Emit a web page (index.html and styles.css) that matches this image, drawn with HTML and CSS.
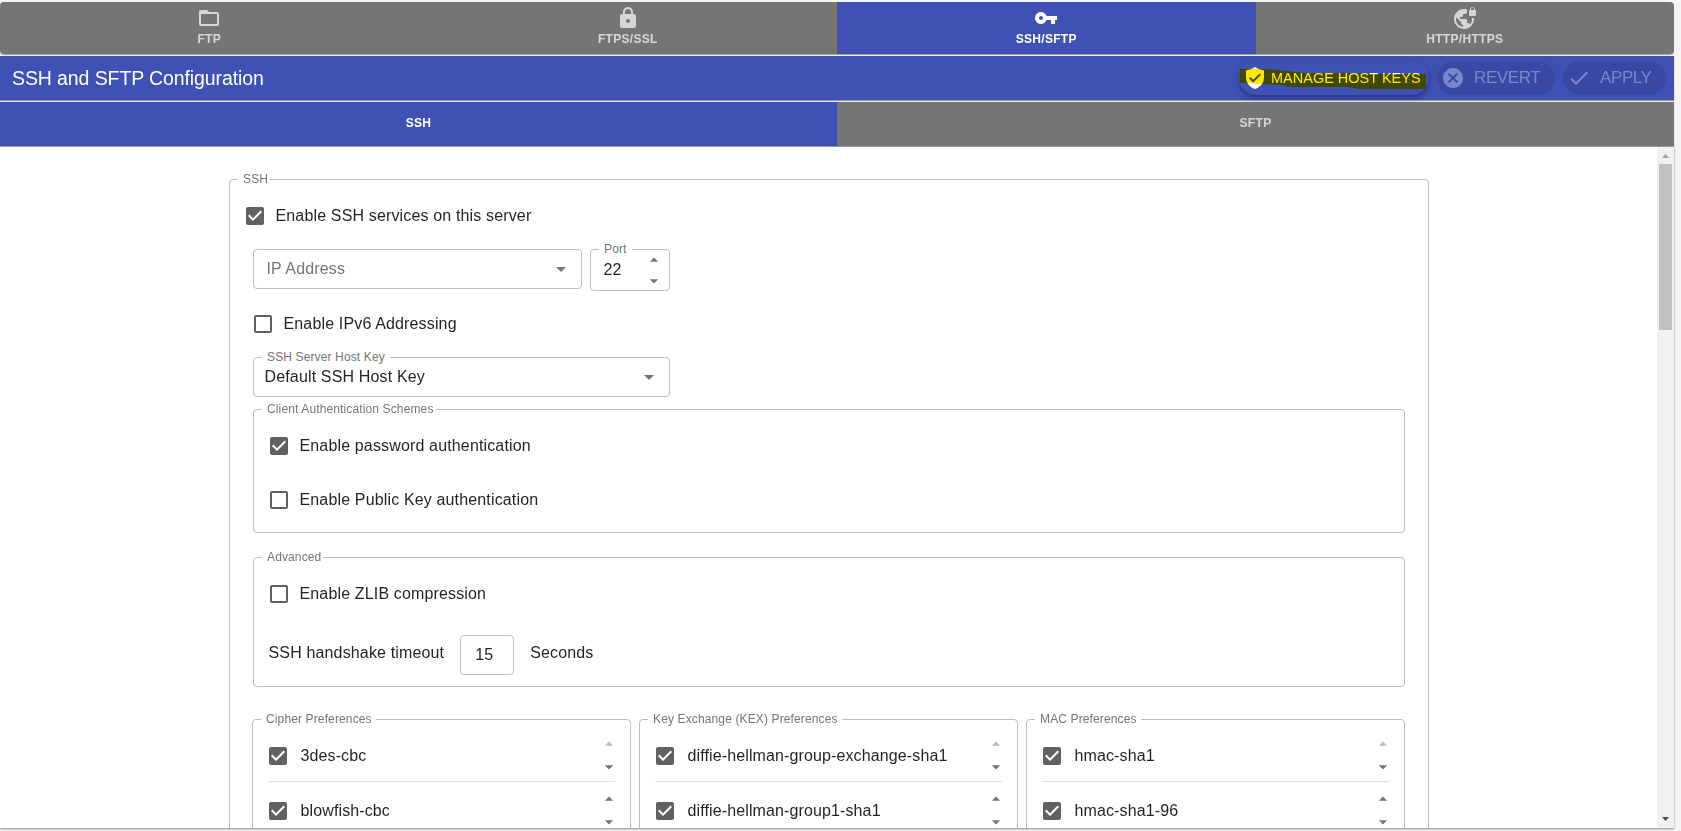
FILE: index.html
```html
<!DOCTYPE html>
<html lang="en">

<head>
    <meta charset="UTF-8">
    <meta name="viewport" content="width=device-width, initial-scale=1.0">
    <title>SSH and SFTP Configuration</title>
    <link rel="stylesheet" href="styles.css">
</head>

<body>
    <!-- shared icons -->
    <svg width="0" height="0" class="sprite">
        <symbol id="checked" viewBox="0 0 24 24">
            <path d="M19 3H5c-1.11 0-2 .9-2 2v14c0 1.1.89 2 2 2h14c1.11 0 2-.9 2-2V5c0-1.1-.89-2-2-2zm-9 14l-5-5 1.41-1.41L10 14.17l7.59-7.59L19 8l-9 9z"/>
        </symbol>
        <symbol id="unchecked" viewBox="0 0 24 24">
            <path d="M19 5v14H5V5h14m0-2H5c-1.1 0-2 .9-2 2v14c0 1.1.9 2 2 2h14c1.1 0 2-.9 2-2V5c0-1.1-.9-2-2-2z"/>
        </symbol>
        <symbol id="down" viewBox="0 0 24 24"><path d="M7 10l5 5 5-5z"/></symbol>
        <symbol id="up" viewBox="0 0 24 24"><path d="M7 14l5-5 5 5z"/></symbol>
    </svg>

    <div class="page">
        <nav class="tabs main-tabs">
            <div class="tab">
                <svg class="icon" viewBox="0 0 24 24"><path d="M20 18H4V8h16m0-2h-8l-2-2H4c-1.110 0-2 .890-2 2v12c0 1.100.900 2 2 2h16c1.100 0 2-.900 2-2V8c0-1.110-.900-2-2-2z"/></svg>
                <span>FTP</span>
            </div>
            <div class="tab">
                <svg class="icon" viewBox="0 0 24 24"><path d="M18 8h-1V6c0-2.76-2.24-5-5-5S7 3.24 7 6v2H6c-1.1 0-2 .9-2 2v10c0 1.1.9 2 2 2h12c1.1 0 2-.9 2-2V10c0-1.1-.9-2-2-2zm-6 9c-1.1 0-2-.9-2-2s.9-2 2-2 2 .9 2 2-.9 2-2 2zm3.1-9H8.9V6c0-1.71 1.39-3.1 3.1-3.1 1.71 0 3.1 1.39 3.1 3.1v2z"/></svg>
                <span>FTPS/SSL</span>
            </div>
            <div class="tab active">
                <svg class="icon" viewBox="0 0 24 24"><path d="M12.65 10C11.83 7.67 9.61 6 7 6c-3.31 0-6 2.69-6 6s2.69 6 6 6c2.61 0 4.83-1.67 5.65-4H17v4h4v-4h2v-4H12.65zM7 14c-1.1 0-2-.9-2-2s.9-2 2-2 2 .9 2 2-.9 2-2 2z"/></svg>
                <span>SSH/SFTP</span>
            </div>
            <div class="tab">
                <svg class="icon" viewBox="0 0 24 24"><path d="M22 4v-.5C22 2.12 20.88 1 19.5 1S17 2.12 17 3.5V4c-.55 0-1 .45-1 1v4c0 .55.45 1 1 1h5c.55 0 1-.45 1-1V5c0-.55-.45-1-1-1zm-.8 0h-3.4v-.5c0-.94.76-1.7 1.7-1.7s1.7.76 1.7 1.7V4zm-2.28 8c.04.33.08.66.08 1 0 2.08-.8 3.97-2.1 5.39-.26-.81-1-1.39-1.9-1.39h-1v-3c0-.55-.45-1-1-1H7v-2h2c.55 0 1-.45 1-1V8h2c1.1 0 2-.9 2-2V3.46c-.95-.3-1.95-.46-3-.46C5.48 3 1 7.48 1 13s4.48 10 10 10 10-4.48 10-10c0-.34-.02-.67-.05-1h-2.03zM10 20.93c-3.95-.49-7-3.85-7-7.93 0-.62.08-1.21.21-1.79L8 16v1c0 1.1.9 2 2 2v1.93z"/></svg>
                <span>HTTP/HTTPS</span>
            </div>
        </nav>

        <header class="toolbar">
            <h1>SSH and SFTP Configuration</h1>
            <button class="btn manage">
                <svg class="icon" viewBox="0 0 24 24"><path d="M12 1Q8 4 3 4.500V11C3 16.550 6 21 12 23C18 21 21 16.550 21 11V4.500Q16 4 12 1ZM10.200 16.600L6 12.400L7.400 11L10.200 13.800L16.600 7.400L18 8.800Z"/></svg>
                <span>MANAGE HOST KEYS</span>
                <svg class="marker" viewBox="0 0 186 20"><path d="M0 0H23L48 2L65 4L110 4L135 5H186V20H120L108 18H53L40 16L23 15L0 14Z"/></svg>
            </button>
            <button class="btn revert" disabled>
                <svg class="icon" viewBox="0 0 24 24"><path d="M12 2C6.470 2 2 6.470 2 12s4.470 10 10 10 10-4.470 10-10S17.530 2 12 2zm5 13.590L15.590 17 12 13.410 8.410 17 7 15.590 10.590 12 7 8.410 8.410 7 12 10.590 15.590 7 17 8.410 13.410 12 17 15.590z"/></svg>
                <span>REVERT</span>
            </button>
            <button class="btn apply" disabled>
                <svg class="icon" viewBox="0 0 24 24"><path d="M9 16.170L4.830 12l-1.420 1.410L9 19 21 7l-1.410-1.410z"/></svg>
                <span>APPLY</span>
            </button>
        </header>

        <nav class="tabs sub-tabs">
            <div class="tab active">SSH</div>
            <div class="tab">SFTP</div>
        </nav>

        <main class="content">
            <div class="scroll-area">
                <fieldset class="group ssh">
                    <legend>SSH</legend>
                    <label class="check"><svg><use href="#checked"/></svg>Enable SSH services on this server</label>

                    <div class="inner">
                        <div class="row">
                            <div class="field ip">
                                <span class="placeholder">IP Address</span>
                                <svg class="arrow"><use href="#down"/></svg>
                            </div>
                            <div class="field port">
                                <span class="label">Port</span>
                                <span>22</span>
                                <div class="spinner">
                                    <svg><use href="#up"/></svg>
                                    <svg><use href="#down"/></svg>
                                </div>
                            </div>
                        </div>

                        <label class="check ipv6"><svg><use href="#unchecked"/></svg>Enable IPv6 Addressing</label>

                        <div class="field host-key">
                            <span class="label">SSH Server Host Key</span>
                            <span>Default SSH Host Key</span>
                            <svg class="arrow"><use href="#down"/></svg>
                        </div>

                        <fieldset class="group auth">
                            <legend>Client Authentication Schemes</legend>
                            <label class="check"><svg><use href="#checked"/></svg>Enable password authentication</label>
                            <label class="check"><svg><use href="#unchecked"/></svg>Enable Public Key authentication</label>
                        </fieldset>

                        <fieldset class="group advanced">
                            <legend>Advanced</legend>
                            <label class="check"><svg><use href="#unchecked"/></svg>Enable ZLIB compression</label>
                            <div class="timeout">
                                <span>SSH handshake timeout</span>
                                <div class="field seconds">15</div>
                                <span>Seconds</span>
                            </div>
                        </fieldset>
                    </div>

                    <div class="prefs">
                        <fieldset class="group">
                            <legend>Cipher Preferences</legend>
                            <div class="pref">
                                <label class="check"><svg><use href="#checked"/></svg>3des-cbc</label>
                                <div class="spinner first"><svg><use href="#up"/></svg><svg><use href="#down"/></svg></div>
                            </div>
                            <div class="pref">
                                <label class="check"><svg><use href="#checked"/></svg>blowfish-cbc</label>
                                <div class="spinner"><svg><use href="#up"/></svg><svg><use href="#down"/></svg></div>
                            </div>
                        </fieldset>
                        <fieldset class="group">
                            <legend>Key Exchange (KEX) Preferences</legend>
                            <div class="pref">
                                <label class="check"><svg><use href="#checked"/></svg>diffie-hellman-group-exchange-sha1</label>
                                <div class="spinner first"><svg><use href="#up"/></svg><svg><use href="#down"/></svg></div>
                            </div>
                            <div class="pref">
                                <label class="check"><svg><use href="#checked"/></svg>diffie-hellman-group1-sha1</label>
                                <div class="spinner"><svg><use href="#up"/></svg><svg><use href="#down"/></svg></div>
                            </div>
                        </fieldset>
                        <fieldset class="group">
                            <legend>MAC Preferences</legend>
                            <div class="pref">
                                <label class="check"><svg><use href="#checked"/></svg>hmac-sha1</label>
                                <div class="spinner first"><svg><use href="#up"/></svg><svg><use href="#down"/></svg></div>
                            </div>
                            <div class="pref">
                                <label class="check"><svg><use href="#checked"/></svg>hmac-sha1-96</label>
                                <div class="spinner"><svg><use href="#up"/></svg><svg><use href="#down"/></svg></div>
                            </div>
                        </fieldset>
                    </div>
                </fieldset>
            </div>

            <div class="scrollbar">
                <svg class="sb-up" viewBox="0 0 17 17"><path d="M5 11h7L8.500 7z"/></svg>
                <div class="thumb"></div>
                <svg class="sb-down" viewBox="0 0 17 17"><path d="M5 6h7L8.500 10z"/></svg>
            </div>
        </main>
    </div>
</body>

</html>
```

FILE: styles.css
```css
* {
    box-sizing: border-box;
}

body {
    margin: 0;
    height: 831px;
    overflow: hidden;
    background: #f5f5f5;
    font-family: "Liberation Sans", Arial, sans-serif;
    font-size: 16px;
    letter-spacing: 0.15px;
    color: rgba(0, 0, 0, 0.87);
}

svg {
    display: block;
    fill: currentColor;
    flex: none;
}

.sprite {
    position: absolute;
}

.page {
    width: 1674px;
    height: 826px;
    margin-top: 2px;
    display: flex;
    flex-direction: column;
    gap: 2px;
}

/* tabs */
.tabs {
    display: flex;
    flex: none;
    overflow: hidden;
    box-shadow: 0 1px 1px #999;
}

.tab {
    flex: 1;
    display: flex;
    flex-direction: column;
    align-items: center;
    background: #757575;
    color: rgba(255, 255, 255, 0.7);
    font-size: 12px;
    font-weight: bold;
    letter-spacing: 0.3px;
    line-height: 16px;
}

.tab.active {
    background: #3f51b5;
    color: #fff;
}

.main-tabs {
    height: 52px;
    border-radius: 4px;
}

.main-tabs .tab {
    padding-top: 4px;
}

.main-tabs .icon {
    width: 24px;
    height: 24px;
    margin-bottom: 1px;
}

.sub-tabs {
    height: 44px;
}

.sub-tabs .tab {
    justify-content: center;
    padding-bottom: 2px;
}

/* toolbar */
.toolbar {
    height: 44px;
    flex: none;
    display: flex;
    align-items: center;
    gap: 8px;
    padding: 0 8px 0 12px;
    background: #3f51b5;
    color: #fff;
    box-shadow: 0 1px 1px #999;
}

h1 {
    flex: 1;
    margin: 0;
    font-size: 19.5px;
    font-weight: normal;
    letter-spacing: -0.1px;
}

.btn {
    position: relative;
    display: flex;
    align-items: center;
    height: 34px;
    padding: 0;
    border: 0;
    border-radius: 17px;
    background: #3f51b5;
    color: #fff;
    font-family: inherit;
    font-size: 14.5px;
}

.btn .icon {
    width: 24px;
    height: 24px;
}

.btn:disabled {
    background: #3949a3;
    color: #7a86cb;
    font-size: 17px;
    letter-spacing: -0.4px;
}

.manage {
    width: 190px;
    padding-left: 4px;
    gap: 4px;
    box-shadow: 0 3px 5px -1px rgba(0, 0, 0, 0.25), 0 2px 6px rgba(0, 0, 0, 0.15);
}

/* highlighter stroke over the button label */
.marker {
    position: absolute;
    left: 1px;
    top: 8px;
    width: 186px;
    height: 20px;
    fill: #ffe800;
    mix-blend-mode: multiply;
}

.revert {
    width: 118px;
    padding-left: 4px;
    gap: 9px;
}

.apply {
    width: 103px;
    padding-left: 4px;
    gap: 9px;
}

/* content */
.content {
    flex: 1;
    min-height: 0;
    margin-top: -1px;
    display: flex;
    background: #fff;
    box-shadow: 0 1px 2px #888;
}

.scroll-area {
    flex: 1;
    overflow: hidden;
    padding-top: 25px;
}

.group {
    min-width: 0;
    margin: 0;
    padding: 0;
    border: 1px solid #bdbdbd;
    border-radius: 4px;
}

legend {
    margin-left: 8px;
    padding: 0 2px 0 5.5px;
    font-size: 12px;
    line-height: 15px;
    letter-spacing: 0.13px;
    color: #757575;
}

.ssh {
    width: 1200px;
    height: 800px;
    margin: 0 auto;
}

.check {
    display: flex;
    align-items: center;
    gap: 9px;
    height: 24px;
}

.check svg {
    width: 24px;
    height: 24px;
    color: #616161;
}

.ssh > .check {
    margin: 17px 0 0 13px;
}

.inner {
    padding: 21px 23px 0;
}

.row {
    display: flex;
    gap: 8px;
}

.field {
    position: relative;
    display: flex;
    align-items: center;
    height: 40px;
    padding-left: 11px;
    border: 1px solid #bdbdbd;
    border-radius: 4px;
}

.label {
    position: absolute;
    left: 8px;
    top: -8px;
    padding: 0 5px 0 5.5px;
    background: #fff;
    color: #757575;
    font-size: 12px;
    line-height: 15px;
    letter-spacing: 0.13px;
}

.placeholder {
    color: #757575;
}

.arrow {
    width: 24px;
    height: 24px;
    margin-left: auto;
    color: #757575;
}

.ip {
    width: 329px;
    padding: 0 8px 0 13px;
}

.port {
    width: 80px;
    height: 42px;
    padding: 0 5px 0 13px;
}

.spinner {
    display: flex;
    flex-direction: column;
    gap: 1px;
    margin-left: auto;
    color: #757575;
}

.spinner svg {
    width: 20px;
    height: 20px;
}

.spinner.first svg:first-child {
    color: #bdbdbd;
}

.ipv6 {
    margin: 21px 0;
    margin-left: -2px;
}

.host-key {
    width: 417px;
    padding-right: 8px;
}

.auth {
    height: 131px;
    margin-top: 5px;
}

.auth .check,
.advanced .check {
    margin: 17px 0 30px 13px;
}

.advanced {
    height: 137px;
    margin-top: 17px;
}

.timeout {
    display: flex;
    align-items: center;
    gap: 16px;
    margin: -1px 0 0 15px;
}

.timeout span {
    padding-bottom: 4px;
}

.seconds {
    width: 54px;
    padding-left: 14px;
}

/* preference lists */
.prefs {
    display: grid;
    grid-template-columns: repeat(3, 1fr);
    gap: 8px;
    height: 200px;
    margin: 25px 23px 0 22px;
}

.prefs legend {
    padding-right: 4px;
}

.pref {
    display: flex;
    align-items: center;
    height: 55px;
    margin: 0 15px;
    padding-top: 3px;
    border-bottom: 1px solid #e0e0e0;
}

.pref .check {
    gap: 11px;
    margin-left: -2px;
    letter-spacing: 0.12px;
}

.pref .spinner {
    gap: 3px;
    margin-right: -4px;
}

/* scrollbar */
.scrollbar {
    width: 17px;
    display: flex;
    flex-direction: column;
    background: #f1f1f1;
}

.scrollbar svg {
    width: 17px;
    height: 17px;
}

.sb-up {
    color: #a3a3a3;
}

.thumb {
    height: 166px;
    margin: 0 2px;
    background: #c1c1c1;
}

.sb-down {
    margin-top: auto;
    color: #505050;
}
```
